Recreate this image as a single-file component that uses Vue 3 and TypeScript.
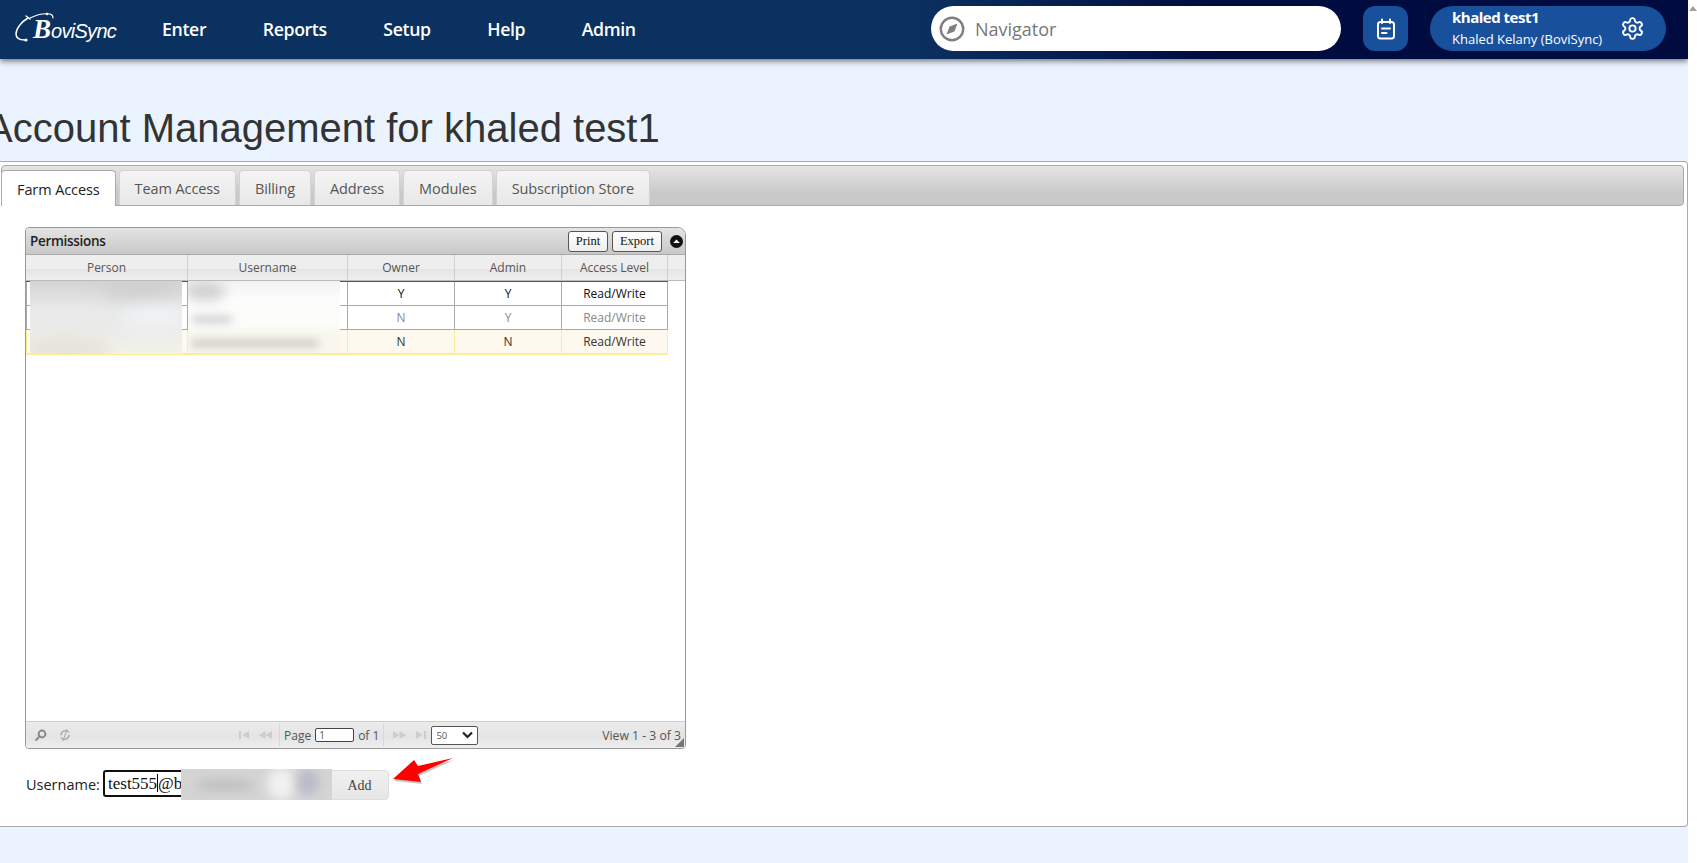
<script setup lang="ts">
interface GridRow {
  owner: string
  admin: string
  level: string
  kind: string
}

const navItems = ['Enter', 'Reports', 'Setup', 'Help', 'Admin']
const tabs = ['Farm Access', 'Team Access', 'Billing', 'Address', 'Modules', 'Subscription Store']
const columns = ['Person', 'Username', 'Owner', 'Admin', 'Access Level']

const rows: GridRow[] = [
  { owner: 'Y', admin: 'Y', level: 'Read/Write', kind: 'first' },
  { owner: 'N', admin: 'Y', level: 'Read/Write', kind: 'muted' },
  { owner: 'N', admin: 'N', level: 'Read/Write', kind: 'hover' },
]

const gearPath =
  'M12.22 2h-.44a2 2 0 0 0-2 2v.18a2 2 0 0 1-1 1.73l-.43.25a2 2 0 0 1-2 0l-.15-.08a2 2 0 0 0-2.73.73l-.22.38a2 2 0 0 0 .73 2.73l.15.1a2 2 0 0 1 1 1.72v.51a2 2 0 0 1-1 1.74l-.15.09a2 2 0 0 0-.73 2.73l.22.38a2 2 0 0 0 2.73.73l.15-.08a2 2 0 0 1 2 0l.43.25a2 2 0 0 1 1 1.73V20a2 2 0 0 0 2 2h.44a2 2 0 0 0 2-2v-.18a2 2 0 0 1 1-1.73l.43-.25a2 2 0 0 1 2 0l.15.08a2 2 0 0 0 2.73-.73l.22-.39a2 2 0 0 0-.73-2.73l-.15-.08a2 2 0 0 1-1-1.74v-.5a2 2 0 0 1 1-1.74l.15-.09a2 2 0 0 0 .73-2.73l-.22-.38a2 2 0 0 0-2.73-.73l-.15.08a2 2 0 0 1-2 0l-.43-.25a2 2 0 0 1-1-1.73V4a2 2 0 0 0-2-2z'
</script>

<template>
  <div class="shell">
    <div class="page">
      <header class="topbar">
        <div class="logo">
          <svg class="orbit" width="42" height="32" viewBox="0 0 42 32" fill="none" stroke="#fff" stroke-width="1.5" stroke-linecap="round">
            <path d="M14 6C7 10 2 17 2 22c0 4 4 6 9 6" />
            <path d="M16 6c6-3 14-5 20-4 2 .5 3 2 3 4" stroke-width="1.1" />
            <path d="M12 4l4 3" stroke-width="1.4" />
            <circle cx="12" cy="28" r="1.6" fill="#fff" stroke="none" />
            <circle cx="33" cy="2" r="1.3" fill="#fff" stroke="none" />
          </svg>
          <span class="logo-b">B</span><span class="logo-rest">oviSync</span>
        </div>
        <nav class="nav">
          <span v-for="item in navItems" :key="item" class="nav-item">{{ item }}</span>
        </nav>
        <div class="spacer" />
        <div class="navigator">
          <svg width="26" height="26" viewBox="0 0 26 26" fill="none">
            <circle cx="13" cy="13" r="11.2" stroke="#808080" stroke-width="2.4" />
            <path d="M18.5 7.5 15.4 15.4 7.5 18.5 10.6 10.6z" fill="#808080" />
          </svg>
          <span>Navigator</span>
        </div>
        <div class="calendar">
          <svg width="24" height="24" viewBox="0 0 24 24" fill="none" stroke="#fff" stroke-width="2" stroke-linecap="round" stroke-linejoin="round">
            <rect x="4" y="5" width="16" height="16.5" rx="2.5" />
            <path d="M8 2.5V6M16 2.5V6M8 11.5h8M8 16h4.5" />
          </svg>
        </div>
        <div class="user">
          <div class="user-text">
            <div class="user-name">khaled test1</div>
            <div class="user-org">Khaled Kelany (BoviSync)</div>
          </div>
          <svg width="25" height="25" viewBox="0 0 24 24" fill="none" stroke="#fff" stroke-width="1.8" stroke-linecap="round" stroke-linejoin="round">
            <path :d="gearPath" />
            <circle cx="12" cy="12" r="3" />
          </svg>
        </div>
      </header>

      <h1 class="title">Account Management for khaled test1</h1>

      <section class="panel">
        <div class="tabbar">
          <div v-for="(tab, i) in tabs" :key="tab" class="tab" :class="{ active: i === 0 }">{{ tab }}</div>
        </div>

        <div class="content">
          <div class="grid">
            <div class="caption">
              <span class="caption-title">Permissions</span>
              <div class="spacer" />
              <button class="cap-btn print">Print</button>
              <button class="cap-btn export">Export</button>
              <svg class="collapse" width="13" height="13" viewBox="0 0 13 13">
                <circle cx="6.5" cy="6.5" r="6.5" fill="#111" />
                <path d="M3.2 8 6.5 4.4 9.8 8z" fill="#fff" />
              </svg>
            </div>

            <div class="head-row">
              <div v-for="col in columns" :key="col" class="head-cell">{{ col }}</div>
              <div class="head-cell last" />
            </div>

            <div class="body">
              <div v-for="row in rows" :key="row.kind" class="row" :class="row.kind">
                <div class="cell" />
                <div class="cell" />
                <div class="cell">{{ row.owner }}</div>
                <div class="cell">{{ row.admin }}</div>
                <div class="cell">{{ row.level }}</div>
              </div>

              <div class="redact redact-person"><i class="smear a" /><i class="smear b" /><i class="smear c" /></div>
              <div class="redact redact-user"><i class="smear d" /><i class="smear e" /><i class="smear f" /></div>
            </div>

            <div class="pager">
              <div class="pager-left">
                <svg width="13" height="13" viewBox="0 0 13 13" fill="none" stroke="#8a8a8a" stroke-width="2">
                  <circle cx="8" cy="5" r="3.4" />
                  <path d="M5.5 7.5 1.5 11.5" />
                </svg>
                <svg width="12" height="14" viewBox="0 0 12 14" fill="none" stroke="#a8a8a8" stroke-width="1.4">
                  <path d="M10 4.2A4.6 4.6 0 0 0 2 7M2 9.8A4.6 4.6 0 0 0 10 7" />
                  <path d="M8 1 4 13" stroke-width="1" />
                </svg>
              </div>
              <div class="pager-center">
                <div class="page-arrows before">
                  <svg width="10" height="8" viewBox="0 0 10 8" fill="#cdcdcd">
                    <path d="M0 0h2v8H0zM10 0v8L3.5 4z" />
                  </svg>
                  <svg width="13" height="8" viewBox="0 0 13 8" fill="#cdcdcd">
                    <path d="M6.5 0v8L0 4zM13 0v8L6.5 4z" />
                  </svg>
                </div>
                <span class="sep" />
                <span>Page</span>
                <span class="page-input">1</span>
                <span>of 1</span>
                <span class="sep" />
                <div class="page-arrows after">
                  <svg width="13" height="8" viewBox="0 0 13 8" fill="#cdcdcd">
                    <path d="M0 0v8l6.5-4zM6.5 0v8L13 4z" />
                  </svg>
                  <svg width="10" height="8" viewBox="0 0 10 8" fill="#cdcdcd">
                    <path d="M0 0v8l6.5-4zM8 0h2v8H8z" />
                  </svg>
                </div>
                <div class="page-select">
                  <span>50</span>
                  <svg width="11" height="8" viewBox="0 0 11 8" fill="none" stroke="#222" stroke-width="2.2">
                    <path d="M1 1.5 5.5 6 10 1.5" />
                  </svg>
                </div>
              </div>
              <div class="pager-right">View 1 - 3 of 3</div>
              <svg class="resize" width="9" height="9" viewBox="0 0 9 9">
                <path d="M9 0V9H0z" fill="#777" />
              </svg>
            </div>
          </div>

          <div class="add-row">
            <label class="add-label">Username:</label>
            <div class="add-input">test555<span class="caret" />@b</div>
            <button class="add-btn">Add</button>
            <div class="redact redact-input"><i class="smear g" /><i class="smear h" /><i class="smear k" /></div>
            <svg class="pointer" width="64" height="30" viewBox="0 0 64 30">
              <polygon points="2,23 22,4 27,10 62,2 27,18 30,26" fill="#000" opacity=".22" transform="translate(1 2)" />
              <polygon points="2,23 23,4 27,10 62,2 27,18 30,26" fill="#f00" />
            </svg>
          </div>
        </div>
      </section>
    </div>
    <aside class="scroll">
      <span class="scroll-up" />
    </aside>
  </div>
</template>

<style>
html, body { margin: 0; overflow: hidden; background: #fff; }
</style>

<style scoped>
.shell {
  display: grid;
  grid-template-columns: 1688px 9px;
  height: 863px;
  overflow: hidden;
  font-family: "Open Sans", sans-serif;
}
.page {
  background: #ebf3fe;
  min-width: 0;
  overflow: hidden;
}
.spacer { flex: 1; }

.topbar {
  display: flex;
  align-items: center;
  height: 59px;
  padding: 0 22px 2px 0;
  box-sizing: border-box;
  background: linear-gradient(90deg, #0b3160 0, #0b3160 54%, #000b40 72%, #000b40 100%);
  box-shadow: 0 2px 6px rgba(0, 0, 0, .55);
  position: relative;
}
.logo {
  position: relative;
  display: flex;
  align-items: baseline;
  width: 162px;
  padding: 3px 0 0 33px;
  box-sizing: border-box;
  color: #fff;
  font-style: italic;
}
.orbit { position: absolute; left: 14px; top: 1px; }
.logo-b { font: italic 700 27px/30px "Liberation Serif", serif; }
.logo-rest { font: italic 400 20px/30px "Liberation Sans", sans-serif; letter-spacing: -.7px; }
.nav { display: flex; gap: 56.5px; }
.nav-item { color: #fff; font-size: 17.7px; font-weight: 600; letter-spacing: -.35px; }

.navigator {
  display: flex;
  align-items: center;
  gap: 10px;
  width: 410px;
  height: 45px;
  padding-left: 8px;
  box-sizing: border-box;
  margin-right: 22px;
  border-radius: 23px;
  background: #fff;
  color: #777;
  font-size: 18px;
}
.calendar {
  display: flex;
  align-items: center;
  justify-content: center;
  width: 45px;
  height: 45px;
  margin-right: 22px;
  border-radius: 12px;
  background: #18509b;
}
.user {
  display: flex;
  align-items: center;
  justify-content: space-between;
  width: 236px;
  height: 45px;
  padding: 0 21px 0 22px;
  box-sizing: border-box;
  border-radius: 23px;
  background: #18509b;
  color: #fff;
}
.user-name { font-size: 15px; font-weight: 700; line-height: 20px; letter-spacing: -.5px; margin-top: -2px; }
.user-org { font-size: 13px; line-height: 20px; margin-top: 2px; }

.title {
  margin: 47px 0 11px -14px;
  font: 400 40px/44px "Liberation Sans", sans-serif;
  color: #333;
  white-space: nowrap;
}

.panel {
  height: 666px;
  box-sizing: border-box;
  padding: 3px 3px 0 1px;
  border: 1px solid #aaa;
  border-left: 0;
  border-radius: 0 4px 4px 0;
  background: #fff;
}
.tabbar {
  display: flex;
  align-items: flex-end;
  gap: 3px;
  height: 41px;
  box-sizing: border-box;
  border: 1px solid #aaa;
  border-radius: 4px;
  background: linear-gradient(#e5e5e5, #c9c9c9 70%);
}
.tab {
  height: 35px;
  padding: 1px 15px 0;
  box-sizing: border-box;
  display: flex;
  align-items: center;
  border: 1px solid #d3d3d3;
  border-bottom: 0;
  border-radius: 4px 4px 0 0;
  background: linear-gradient(#f4f4f4, #e8e8e8);
  color: #555;
  font-size: 14.5px;
  letter-spacing: -.1px;
}
.tab.active {
  height: 36px;
  margin: 0 0 -1px -1px;
  border-color: #aaa;
  background: #fff;
  color: #222;
}

.content { padding: 21px 0 0 24px; }

.grid {
  width: 661px;
  height: 522px;
  box-sizing: border-box;
  display: flex;
  flex-direction: column;
  border: 1px solid #999;
  border-radius: 4px 8px 4px 4px;
  background: #fff;
  overflow: hidden;
}
.caption {
  display: flex;
  align-items: center;
  height: 27px;
  box-sizing: border-box;
  flex: none;
  padding: 0 2px 0 4px;
  border-bottom: 1px solid #aaa;
  background: linear-gradient(#e4e4e4, #c8c8c8);
}
.caption-title { font-size: 13.5px; font-weight: 600; color: #222; letter-spacing: -.3px; }
.cap-btn {
  height: 21px;
  padding: 0;
  border: 1px solid #555;
  border-radius: 3px;
  background: linear-gradient(#fff, #eee);
  color: #111;
  font: 12.5px "Liberation Serif", serif;
}
.print { width: 40px; margin-right: 4px; }
.export { width: 50px; margin-right: 8px; }

.head-row {
  display: grid;
  grid-template-columns: 162px 160px 107px 107px 106px 1fr;
  height: 26px;
  flex: none;
  border-bottom: 1px solid #bbb;
  box-sizing: border-box;
}
.head-cell {
  display: flex;
  align-items: center;
  justify-content: center;
  border-right: 1px solid #d0d0d0;
  background: linear-gradient(#eeeeee 55%, #e4e4e4 55%, #efefef);
  color: #555;
  font-size: 12px;
}
.head-cell.last { border-right: 0; }

.body {
  position: relative;
  flex: 1;
  min-height: 0;
}
.row {
  display: grid;
  grid-template-columns: 162px 160px 107px 107px 106px;
  height: 24px;
  width: 642px;
  box-sizing: border-box;
  border-bottom: 1px solid #aaa;
}
.cell {
  display: flex;
  align-items: center;
  justify-content: center;
  border-right: 1px solid #aaa;
  color: #111;
  font-size: 12px;
}
.row.first { height: 25px; border-top: 1px solid #555; }
.row .cell:first-child { border-left: 1px solid #aaa; }
.row.muted .cell { color: #888; }
.row.hover {
  height: 25px;
  border-bottom: 2px solid #fbee9a;
  background: #fdf9ee;
}
.row.hover .cell {
  border-color: #fbee9a;
  color: #333;
}

.redact {
  position: absolute;
  overflow: hidden;
}
.redact-person {
  left: 4px;
  top: 0;
  width: 152px;
  height: 73px;
  background: linear-gradient(#d3d3d3, #e8e9e9 38%, #ebebea 65%, #f3f2e8);
}
.redact-user {
  left: 162px;
  top: 0;
  width: 152px;
  height: 72px;
  background: linear-gradient(#f2f2f2, #fcfcfc 25%, #fcfcfb 60%, #f8f7ee 75%);
}
.redact-input {
  left: 156px;
  top: -1px;
  width: 151px;
  height: 31px;
  background: #d4d4d5;
}
.smear {
  position: absolute;
  display: block;
  border-radius: 50%;
}
.smear.a { left: 70px; top: -6px; width: 80px; height: 24px; background: #d0d0d0; filter: blur(8px); }
.smear.b { left: 90px; top: 26px; width: 70px; height: 22px; background: #f0f2f5; filter: blur(8px); }
.smear.c { left: -8px; top: 56px; width: 90px; height: 22px; background: #e4e3d8; filter: blur(7px); }
.smear.d { left: -4px; top: 0; width: 42px; height: 20px; background: #d2d2d2; filter: blur(6px); }
.smear.e { left: 4px; top: 35px; width: 40px; height: 7px; background: #cbcbcb; border-radius: 4px; filter: blur(4px); }
.smear.f { left: 3px; top: 59px; width: 128px; height: 7px; background: #c8c8c0; border-radius: 4px; filter: blur(4px); }
.smear.g { left: 86px; top: -2px; width: 28px; height: 34px; background: #f2f2f2; filter: blur(6px); }
.smear.h { left: 116px; top: 0; width: 22px; height: 26px; background: #b9bcc9; filter: blur(5px); }
.smear.k { left: 14px; top: 10px; width: 60px; height: 12px; background: #c0c0c0; filter: blur(5px); }

.pager {
  position: relative;
  display: flex;
  align-items: center;
  height: 26px;
  flex: none;
  margin-top: auto;
  border-top: 1px solid #ccc;
  background: linear-gradient(#ececec, #e4e4e4 55%, #eeeeee);
  color: #555;
  font-size: 12px;
}
.pager-left {
  display: flex;
  align-items: center;
  gap: 12px;
  width: 213px;
  padding-left: 8px;
  box-sizing: border-box;
}
.pager-center { display: flex; align-items: center; gap: 4px; }
.page-arrows { display: flex; gap: 10px; }
.page-arrows.before { margin-right: 3px; }
.page-arrows.after { margin: 0 1px 0 5px; }
.sep { width: 1px; height: 22px; background: #d8d8d8; }
.page-input {
  width: 39px;
  height: 14px;
  box-sizing: border-box;
  padding-left: 3px;
  border: 1px solid #444;
  border-radius: 2px;
  background: #fff;
  font: 10px/12px "Open Sans", sans-serif;
}
.page-select {
  display: flex;
  align-items: center;
  justify-content: space-between;
  width: 47px;
  height: 19px;
  box-sizing: border-box;
  padding: 0 4px;
  border: 1px solid #555;
  border-radius: 2px;
  background: #fff;
  font-size: 9.5px;
}
.pager-right { margin-left: auto; padding-right: 4px; font-size: 12.2px; }
.resize { position: absolute; right: 1px; bottom: 1px; }

.add-row {
  position: relative;
  display: flex;
  align-items: flex-start;
  width: 364px;
  margin-top: 21px;
  height: 30px;
}
.add-label { font-size: 14.5px; line-height: 30px; color: #222; width: 77px; flex: none; margin-left: 1px; white-space: nowrap; }
.add-input {
  width: 228px;
  height: 27px;
  box-sizing: border-box;
  padding-left: 3px;
  border: 2px solid #111;
  border-radius: 3px;
  background: #fff;
  color: #111;
  font: 17px/24px "Liberation Serif", serif;
  white-space: nowrap;
  flex: none;
}
.caret { display: inline-block; width: 0; height: 18px; border-left: 1px solid #000; vertical-align: -3px; }
.add-btn {
  width: 58px;
  height: 30px;
  flex: none;
  padding: 1px 0 0;
  border: 1px solid #ddd;
  border-left: 0;
  border-radius: 0 4px 4px 0;
  background: linear-gradient(#f0f0f0, #e6e6e6);
  color: #444;
  font: 14px "Liberation Serif", serif;
}
.pointer { position: absolute; left: 366px; top: -14px; overflow: visible; }

.scroll { position: relative; background: #fff; }
.scroll-up {
  position: absolute;
  left: 1px;
  top: 6px;
  border-left: 4px solid transparent;
  border-right: 4px solid transparent;
  border-bottom: 5px solid #a0a0a0;
}
</style>
